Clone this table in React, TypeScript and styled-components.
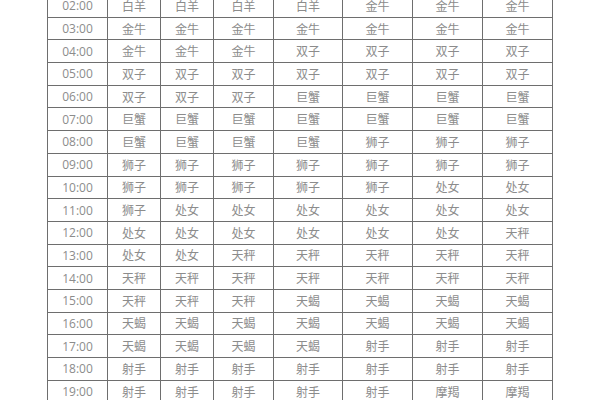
import React from "react";
import styled, { createGlobalStyle } from "styled-components";

const GlobalStyle = createGlobalStyle`
  html, body {
    margin: 0;
    padding: 0;
    background: #fff;
  }
  body {
    width: 600px;
    height: 400px;
    overflow: hidden;
  }
`;

// 時刻ごとの上昇星座（7列）
const rows: [string, string[]][] = [
  ["02:00", ["白羊", "白羊", "白羊", "白羊", "金牛", "金牛", "金牛"]],
  ["03:00", ["金牛", "金牛", "金牛", "金牛", "金牛", "金牛", "金牛"]],
  ["04:00", ["金牛", "金牛", "金牛", "双子", "双子", "双子", "双子"]],
  ["05:00", ["双子", "双子", "双子", "双子", "双子", "双子", "双子"]],
  ["06:00", ["双子", "双子", "双子", "巨蟹", "巨蟹", "巨蟹", "巨蟹"]],
  ["07:00", ["巨蟹", "巨蟹", "巨蟹", "巨蟹", "巨蟹", "巨蟹", "巨蟹"]],
  ["08:00", ["巨蟹", "巨蟹", "巨蟹", "巨蟹", "狮子", "狮子", "狮子"]],
  ["09:00", ["狮子", "狮子", "狮子", "狮子", "狮子", "狮子", "狮子"]],
  ["10:00", ["狮子", "狮子", "狮子", "狮子", "狮子", "处女", "处女"]],
  ["11:00", ["狮子", "处女", "处女", "处女", "处女", "处女", "处女"]],
  ["12:00", ["处女", "处女", "处女", "处女", "处女", "处女", "天秤"]],
  ["13:00", ["处女", "处女", "天秤", "天秤", "天秤", "天秤", "天秤"]],
  ["14:00", ["天秤", "天秤", "天秤", "天秤", "天秤", "天秤", "天秤"]],
  ["15:00", ["天秤", "天秤", "天秤", "天蝎", "天蝎", "天蝎", "天蝎"]],
  ["16:00", ["天蝎", "天蝎", "天蝎", "天蝎", "天蝎", "天蝎", "天蝎"]],
  ["17:00", ["天蝎", "天蝎", "天蝎", "天蝎", "射手", "射手", "射手"]],
  ["18:00", ["射手", "射手", "射手", "射手", "射手", "射手", "射手"]],
  ["19:00", ["射手", "射手", "射手", "射手", "射手", "摩羯", "摩羯"]],
];

const App: React.FC = () => {
  return (
    <>
      <GlobalStyle />
      <Page>
        <Grid>
          {rows.map(([time, signs]) => (
            <React.Fragment key={time}>
              <Cell>{time}</Cell>
              {signs.map((s, i) => (
                <Cell key={i}>{s}</Cell>
              ))}
            </React.Fragment>
          ))}
        </Grid>
      </Page>
    </>
  );
};
export default App;

const Page = styled.div`
  width: 600px;
  height: 400px;
  overflow: hidden;
  padding-left: 47px;
  box-sizing: border-box;
`;

const Grid = styled.div`
  margin-top: -6px;
  display: grid;
  width: 505px;
  grid-template-columns: 60px 53px 53px 60px 69px 70px 70px 70px;
  grid-auto-rows: 22.7px;
  border-left: 1px solid #6e6e6e;
  border-top: 1px solid #6e6e6e;
  box-sizing: border-box;
`;

const Cell = styled.div`
  display: flex;
  align-items: center;
  justify-content: center;
  border-right: 1px solid #6e6e6e;
  border-bottom: 1px solid #6e6e6e;
  box-sizing: border-box;
  font-family: "Open Sans", "Noto Sans CJK SC", sans-serif;
  font-size: 12px;
  color: #8c8c8c;
  white-space: nowrap;
`;
